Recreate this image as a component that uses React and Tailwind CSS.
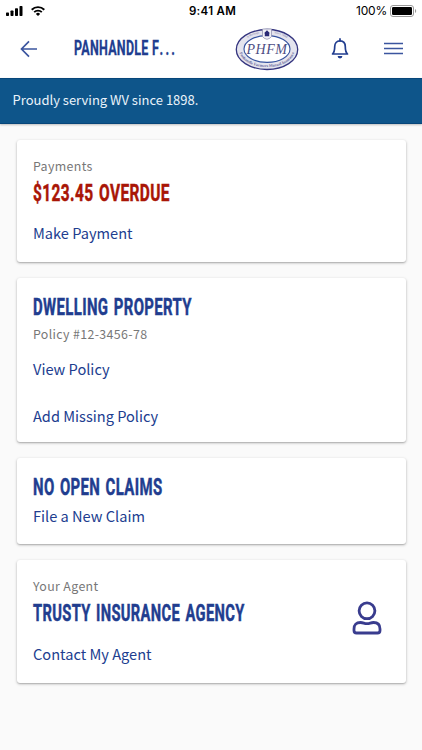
const Heading = ({ children, className = "" }) => (
  <h2 className="h-7 font-['Roboto'] text-[24px] leading-7 font-bold tracking-[0.6px] [word-spacing:2px] [-webkit-text-stroke:0.5px_currentColor]">
    <span className={`inline-block origin-left whitespace-nowrap ${className}`}>{children}</span>
  </h2>
);

const Label = ({ children, className = "" }) => (
  <p className={`h-5 text-[12.4px] leading-5 tracking-[0.35px] text-[#777777] ${className}`}>{children}</p>
);

const CardLink = ({ children, className = "" }) => (
  <a href="#" className={`block h-5 text-[14.6px] leading-5 text-[#213d8f] ${className}`}>
    {children}
  </a>
);

const Card = ({ children, className = "" }) => (
  <section
    className={`rounded-[3px] bg-white pr-6 pl-[16.5px] text-[#213d8f] shadow-[0_1px_3px_rgba(0,0,0,0.28),0_1px_1px_rgba(0,0,0,0.1)] ${className}`}
  >
    {children}
  </section>
);

const StatusBar = () => (
  <div className="flex h-[21px] items-center justify-between pr-[5px] pl-[6px] text-black">
    <div className="flex w-[140px] items-center gap-2">
      <svg width="17" height="10" viewBox="0 0 17 10" fill="currentColor">
        <rect x="0" y="6.5" width="3" height="3.5" rx="0.7" />
        <rect x="4.5" y="4.5" width="3" height="5.5" rx="0.7" />
        <rect x="9" y="2.3" width="3" height="7.7" rx="0.7" />
        <rect x="13.5" y="0" width="3" height="10" rx="0.7" />
      </svg>
      <svg width="14" height="10" viewBox="0 0 14 10" fill="none" stroke="currentColor" strokeWidth="1.9">
        <path d="M0.7 3.7a9 9 0 0 1 12.6 0" />
        <path d="M3.2 6.2a5.4 5.4 0 0 1 7.6 0" />
        <path d="M7 10L4.9 7.9a3 3 0 0 1 4.2 0z" fill="currentColor" stroke="none" />
      </svg>
    </div>
    <span className="pl-[2px] font-['Inter'] text-[11.5px] leading-5 font-semibold tracking-[0.3px]">9:41 AM</span>
    <div className="flex w-[140px] items-center justify-end gap-[3px]">
      <span className="font-['Inter'] text-[12px] leading-5 tracking-[-0.2px]">100%</span>
      <svg width="27" height="12" viewBox="0 0 27 12">
        <rect x="0.5" y="0.5" width="23" height="11" rx="2.5" fill="none" stroke="#999999" />
        <rect x="2" y="2" width="20" height="8" rx="1.2" fill="#000000" />
        <path d="M25 4v4c1.6-.6 1.6-3.4 0-4z" fill="#999999" />
      </svg>
    </div>
  </div>
);

const Logo = () => (
  <svg className="shrink-0" width="64" height="44" viewBox="0 0 64 44">
    <ellipse cx="32" cy="22.5" rx="30.7" ry="20" fill="#e4e4ee" stroke="#35357f" strokeWidth="1.3" />
    <ellipse cx="32" cy="22" rx="23" ry="13.4" fill="#ffffff" stroke="#35529f" strokeWidth="1.1" />
    <path id="logo-top" d="M7 19C12 1 52 1 57 19" fill="none" />
    <path id="logo-bottom" d="M4.3 24C8 45.5 56 45.5 59.7 24" fill="none" />
    <text fontFamily="Liberation Serif, serif" fontSize="3" fill="#77779f">
      <textPath href="#logo-top" startOffset="27%" textAnchor="middle">
        A Heritage
      </textPath>
      <textPath href="#logo-top" startOffset="73%" textAnchor="middle">
        Since 1898
      </textPath>
    </text>
    <text fontFamily="Liberation Serif, serif" fontSize="4" fontWeight="bold" fill="#66669a">
      <textPath href="#logo-bottom" startOffset="50%" textAnchor="middle">
        Panhandle Farmers Mutual Insurance
      </textPath>
    </text>
    <path d="M27.5 2h9v7.5q-1 2-4.5 2.8q-3.5-.8-4.5-2.8z" fill="#f0f0f6" stroke="#8888aa" strokeWidth="0.7" />
    <path d="M29 6.2l3-2.9 3 2.9h-.8v3h-4.4v-3z" fill="#292975" />
    <text
      x="11.5"
      y="26.5"
      fontFamily="Liberation Serif, serif"
      fontSize="14"
      fontStyle="italic"
      textLength="40.5"
      fill="#4e4e84"
    >
      PHFM
    </text>
  </svg>
);

const Header = () => (
  <header className="flex h-[57px] items-center pr-[19.5px] pb-[2px] pl-[20px] text-[#213d8f]">
    <button className="w-[54px] shrink-0" aria-label="Back">
      <svg width="18" height="18" viewBox="0 0 18 18" fill="none" stroke="#3b559f" strokeWidth="1.7">
        <path d="M17 9H2M9 1.3L1.5 9L9 16.7" />
      </svg>
    </button>
    <h1 className="w-[160.5px] shrink-0 pt-px font-['Roboto'] text-[19.5px] leading-7 font-bold tracking-[0.4px]">
      <span className="inline-block origin-left scale-x-[0.64] whitespace-nowrap [-webkit-text-stroke:0.3px_currentColor]">
        PANHANDLE <span className="tracking-[3.6px]">F...</span>
      </span>
    </h1>
    <Logo />
    <button className="ml-[32px]" aria-label="Notifications">
      <svg width="18" height="21" viewBox="0 0 18 21" fill="none" stroke="#213d8f" strokeWidth="1.7">
        <path
          d="M1.5 16h15c-1.8-1.7-2.2-3.2-2.2-7.3c0-3.5-2-5.9-5.3-5.9s-5.3 2.4-5.3 5.9c0 4.1-.4 5.6-2.2 7.3z"
          strokeLinejoin="round"
        />
        <path d="M9 .9v2" strokeLinecap="round" />
        <path d="M6.6 18h4.8a2.4 2.4 0 0 1-4.8 0z" fill="#213d8f" stroke="none" />
      </svg>
    </button>
    <button className="ml-auto" aria-label="Menu">
      <svg width="19" height="13" viewBox="0 0 19 13" stroke="#3b559f" strokeWidth="1.7">
        <path d="M0 1.5h19M0 6.5h19M0 11.5h19" />
      </svg>
    </button>
  </header>
);

export default function App() {
  return (
    <div className="h-[750px] w-[422px] overflow-hidden bg-[#fafafa] font-['Noto_Sans_CJK_JP',sans-serif]">
      <div className="bg-white">
        <StatusBar />
        <Header />
      </div>
      <div className="flex h-[45.5px] items-center border-y border-[#07467a] bg-[#0e558a] px-[12.5px] pb-[2px] text-[13px] leading-5 text-[#eaf3fa] shadow-[0_1px_2px_rgba(0,0,0,0.25)]">
        Proudly serving WV since 1898.
      </div>

      <main className="flex flex-col gap-4 px-[16.5px] pt-4">
        <Card className="h-[122.5px] pt-4">
          <Label>Payments</Label>
          <Heading className="mt-[3px] scale-x-[0.645] text-[#a91506]">$123.45 OVERDUE</Heading>
          <CardLink className="mt-[19px]">Make Payment</CardLink>
        </Card>

        <Card className="h-[164px] pt-[15px]">
          <Heading className="scale-x-[0.622]">DWELLING PROPERTY</Heading>
          <Label className="mt-[2.5px]">Policy #12-3456-78</Label>
          <CardLink className="mt-[15.5px]">View Policy</CardLink>
          <CardLink className="mt-[27px]">Add Missing Policy</CardLink>
        </Card>

        <Card className="h-[86px] pt-[15px]">
          <Heading className="scale-x-[0.622]">NO OPEN CLAIMS</Heading>
          <CardLink className="mt-[5px]">File a New Claim</CardLink>
        </Card>

        <Card className="flex h-[122.5px] items-start justify-between pt-4">
          <div className="w-[260px]">
            <Label>Your Agent</Label>
            <Heading className="mt-[3px] scale-x-[0.612]">TRUSTY INSURANCE AGENCY</Heading>
            <CardLink className="mt-[20px]">Contact My Agent</CardLink>
          </div>
          <svg
            className="mt-[24.5px] shrink-0"
            width="30"
            height="34"
            viewBox="0 0 30 34"
            fill="none"
            stroke="#393c8e"
            strokeWidth="2.8"
          >
            <circle cx="15" cy="9.8" r="7.9" />
            <path d="M4.5 32h21q2.5 0 2.500-2.500v-1.500q0-6.500-6.500-6.500c-3 0-3.500 1.200-6.500 1.200s-3.500-1.200-6.500-1.200q-6.500 0-6.500 6.500v1.500q0 2.500 2.500 2.500z" />
          </svg>
        </Card>
      </main>
    </div>
  );
}
